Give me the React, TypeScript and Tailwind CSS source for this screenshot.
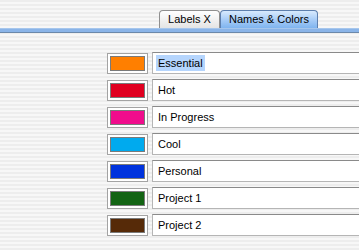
import React from 'react';

const labels = [
  { name: 'Essential', color: 'bg-[#ff7f00]', selected: true },
  { name: 'Hot', color: 'bg-[#e00020]' },
  { name: 'In Progress', color: 'bg-[#f00c8c]' },
  { name: 'Cool', color: 'bg-[#00aaee]' },
  { name: 'Personal', color: 'bg-[#0033dd]' },
  { name: 'Project 1', color: 'bg-[#136414]' },
  { name: 'Project 2', color: 'bg-[#562a08]' },
];

const stripes =
  'bg-[repeating-linear-gradient(180deg,#ededed_0px,#ededed_2px,#f7f7f7_2px,#f7f7f7_4px)]';

export default function App() {
  return (
    <div
      className={`w-[359px] h-[250px] overflow-hidden ${stripes} text-[11px] text-black`}
      style={{ fontFamily: '"Liberation Sans", Arial, sans-serif' }}
    >
      {/* tab strip */}
      <div className="flex h-[28px] items-end pl-[159px]">
        <div className="h-[18px] w-[61px] rounded-t-[4px] border border-b-0 border-[#8f8f8f] bg-gradient-to-b from-[#ffffff] to-[#e4e4e4] flex items-center justify-center">
          Labels X
        </div>
        <div className="h-[18px] w-[98px] rounded-t-[4px] border border-b-0 border-[#5d7fae] bg-gradient-to-b from-[#d8eafd] via-[#a9cdf7] to-[#7fb4ef] flex items-center justify-center">
          Names &amp; Colors
        </div>
      </div>
      <div className="h-[1px] bg-[#a6c6ec]" />
      <div className="h-[3px] bg-[#8ab4e8]" />
      <div className="h-[1px] bg-[#6b88aa]" />

      {/* rows */}
      <div className="flex flex-col gap-[5px] pt-[19px] pl-[107px]">
        {labels.map((l) => (
          <div key={l.name} className="flex items-center gap-[4px] h-[22px]">
            <div className="w-[41px] h-[21px] border border-[#a3a3a3] bg-white p-[2px] shrink-0">
              <div className={`w-full h-full border border-[#7a7a7a] ${l.color}`} />
            </div>
            <div className="h-[22px] w-[260px] shrink-0 border border-[#b5b5b5] border-t-[#8a8a8a] bg-white flex items-center pl-[3px]">
              <span className={l.selected ? 'bg-[#b5d5fd] px-[2px] leading-[16px]' : 'px-[2px] leading-[16px]'}>
                {l.name}
              </span>
            </div>
          </div>
        ))}
      </div>
    </div>
  );
}
